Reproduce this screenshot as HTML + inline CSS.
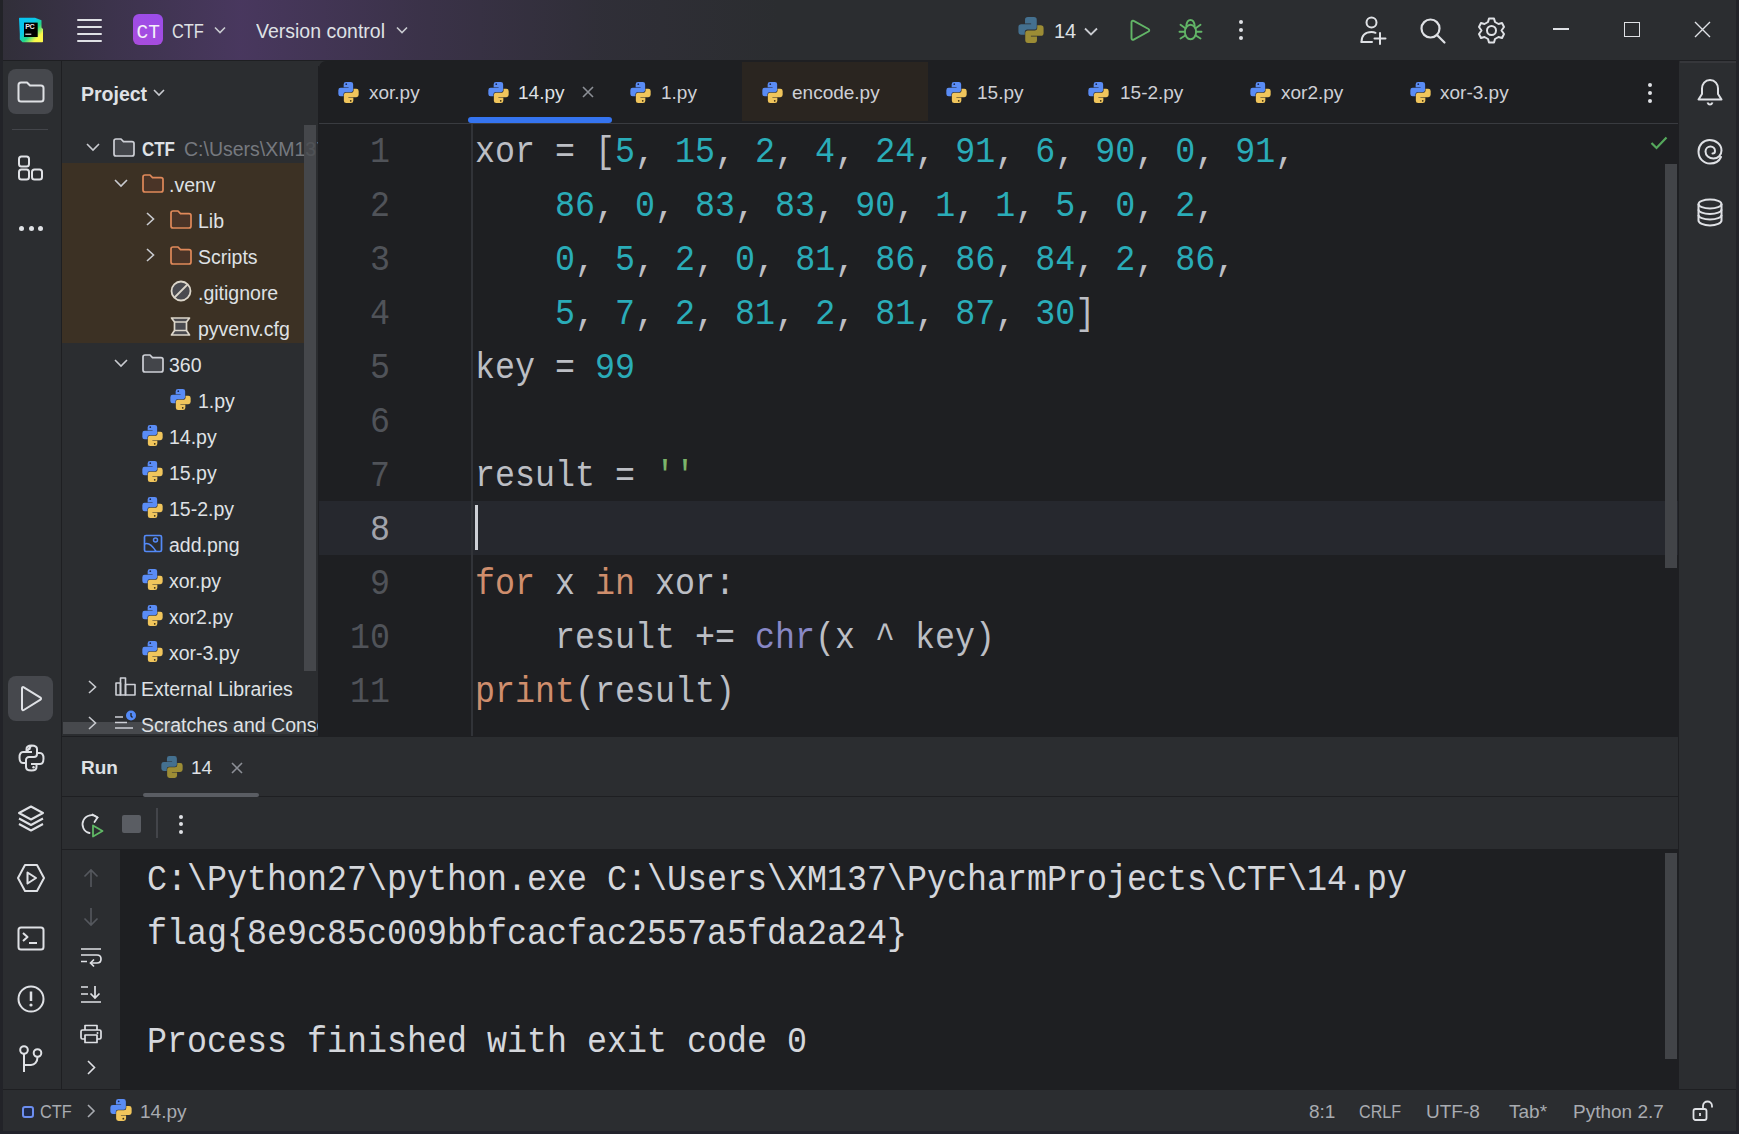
<!DOCTYPE html>
<html><head><meta charset="utf-8">
<style>
*{margin:0;padding:0;box-sizing:border-box}
html,body{width:1739px;height:1134px;overflow:hidden;background:#2B2D30;font-family:"Liberation Sans",sans-serif;color:#DFE1E5}
.a{position:absolute}
.t{position:absolute;white-space:pre;font-size:19px;line-height:22px}
.m{font-family:"Liberation Mono",monospace}
svg{position:absolute;overflow:visible}
</style></head><body>
<svg width="0" height="0" style="position:absolute">
<defs>
<symbol id="py" viewBox="0 0 21 21.7">
<path fill="#5A8CF5" d="M5.5 2.4Q5.5 0 7.9 0H12.9Q15.3 0 15.3 2.4V8.3Q15.3 10.5 13.1 10.5H7.5Q5.3 10.5 5.3 12.7V14.8H2.4Q0 14.8 0 12.4V8.4Q0 6 2.4 6H10.6V5.5H5.5Z"/>
<circle cx="8.2" cy="2.3" r="0.9" fill="#1E2A55"/>
<g transform="rotate(180 10.5 10.85)"><path fill="#F0C55C" d="M5.5 2.4Q5.5 0 7.9 0H12.9Q15.3 0 15.3 2.4V8.3Q15.3 10.5 13.1 10.5H7.5Q5.3 10.5 5.3 12.7V14.8H2.4Q0 14.8 0 12.4V8.4Q0 6 2.4 6H10.6V5.5H5.5Z"/><circle cx="8.2" cy="2.3" r="0.9" fill="#3A2E10"/></g>
</symbol>
<symbol id="pyd" viewBox="0 0 21 21.7">
<path fill="#44708F" d="M5.5 2.4Q5.5 0 7.9 0H12.9Q15.3 0 15.3 2.4V8.3Q15.3 10.5 13.1 10.5H7.5Q5.3 10.5 5.3 12.7V14.8H2.4Q0 14.8 0 12.4V8.4Q0 6 2.4 6H10.6V5.5H5.5Z"/>
<g transform="rotate(180 10.5 10.85)"><path fill="#9C8C35" d="M5.5 2.4Q5.5 0 7.9 0H12.9Q15.3 0 15.3 2.4V8.3Q15.3 10.5 13.1 10.5H7.5Q5.3 10.5 5.3 12.7V14.8H2.4Q0 14.8 0 12.4V8.4Q0 6 2.4 6H10.6V5.5H5.5Z"/></g>
</symbol>
<symbol id="fold" viewBox="0 0 21 18">
<path d="M1 3.2C1 2 2 1 3.2 1H7.5L10 3.6H17.8C19 3.6 20 4.6 20 5.8V14.8C20 16 19 17 17.8 17H3.2C2 17 1 16 1 14.8Z" stroke-width="1.6" stroke-linejoin="round"/>
</symbol>
</defs>
</svg>

<!-- TITLE BAR -->
<div class="a" id="title" style="left:0;top:0;width:1739px;height:60px;background:#2B2D30"></div>
<div class="a" style="left:0;top:0;width:900px;height:60px;background:linear-gradient(90deg,rgba(90,60,120,0.12) 0px,rgba(100,65,140,0.3) 110px,rgba(108,68,150,0.45) 240px,rgba(95,62,130,0.3) 420px,rgba(80,58,110,0.12) 600px,rgba(43,45,48,0) 780px)"></div>


<!-- TITLE CONTENT -->
<svg style="left:18px;top:17px" width="26" height="26" viewBox="0 0 26 26">
<defs><linearGradient id="lg" x1="0" y1="0" x2="1" y2="1"><stop offset="0" stop-color="#07C3F2"/><stop offset="0.38" stop-color="#0BC8E8"/><stop offset="0.58" stop-color="#21D789"/><stop offset="0.8" stop-color="#FCF84A"/><stop offset="1" stop-color="#FCF84A"/></linearGradient></defs>
<path d="M1 1.5Q1 0.8 1.7 0.8H17L23.5 3.2V10.5L25 12V24.5Q25 25.2 24.3 25.2H4.5L1.8 22.5V17Z" fill="url(#lg)"/>
<rect x="6" y="5.6" width="13.7" height="14.4" fill="#000"/>
<text x="7.2" y="12.3" font-family="Liberation Sans" font-size="7.2" font-weight="700" fill="#E8E8E8" letter-spacing="-0.4">PC</text>
<rect x="7.3" y="16.6" width="6" height="1.3" fill="#C8C8C8"/>
</svg>
<div class="a" style="left:77px;top:18.5px;width:25px;height:2.5px;border-radius:1px;background:#DFE1E5"></div>
<div class="a" style="left:77px;top:25.5px;width:25px;height:2.5px;border-radius:1px;background:#DFE1E5"></div>
<div class="a" style="left:77px;top:32.5px;width:25px;height:2.5px;border-radius:1px;background:#DFE1E5"></div>
<div class="a" style="left:77px;top:39.5px;width:25px;height:2.5px;border-radius:1px;background:#DFE1E5"></div>
<div class="a" style="left:133px;top:14px;width:30px;height:31px;border-radius:6px;background:linear-gradient(20deg,#A94CDC,#9A4DEA)"></div>
<div class="t m" style="left:136.5px;top:22px;font-size:19.5px;line-height:22px;color:#F4F0FA;transform:scaleY(1.08);transform-origin:0 17px">CT</div>
<div class="t" style="left:172px;top:20px;font-size:20px;color:#DFE1E5;transform:scaleX(0.82);transform-origin:0 0">CTF</div>
<svg style="left:214px;top:26px" width="12" height="8"><path d="M1 1.5L6 6.5L11 1.5" fill="none" stroke="#C9CBD0" stroke-width="1.6"/></svg>
<div class="t" style="left:256px;top:20px;font-size:20px;color:#DFE1E5;transform:scaleX(0.975);transform-origin:0 0">Version control</div>
<svg style="left:396px;top:26px" width="12" height="8"><path d="M1 1.5L6 6.5L11 1.5" fill="none" stroke="#C9CBD0" stroke-width="1.6"/></svg>

<svg style="left:1018px;top:17px" width="26" height="26"><use href="#pyd"/></svg>
<div class="t" style="left:1054px;top:20px;font-size:20px;color:#DFE1E5">14</div>
<svg style="left:1084px;top:27px" width="14" height="9"><path d="M1 1.5L7 7.5L13 1.5" fill="none" stroke="#C9CBD0" stroke-width="1.8"/></svg>
<svg style="left:1130px;top:19px" width="21" height="22" viewBox="0 0 21 22"><path d="M1.5 3.2C1.5 2 2.7 1.3 3.7 1.9L18.5 10C19.5 10.6 19.5 11.9 18.5 12.5L3.7 20.6C2.7 21.2 1.5 20.5 1.5 19.3Z" fill="none" stroke="#62B567" stroke-width="1.9" stroke-linejoin="round"/></svg>
<svg style="left:1178px;top:18px" width="25" height="23" viewBox="0 0 25 23"><g fill="none" stroke="#62B567" stroke-width="1.9" stroke-linecap="round">
<ellipse cx="12.5" cy="14" rx="5.6" ry="7.3"/>
<path d="M8.3 8C8.6 4.5 10.3 2 12.5 2C14.7 2 16.4 4.5 16.7 8"/>
<path d="M7 10L2.5 6.8M6.8 13.8H1.5M7.2 17.5L2.5 20.5M18 10L22.5 6.8M18.2 13.8H23.5M17.8 17.5L22.5 20.5"/>
</g></svg>
<div class="a" style="left:1239px;top:20px;width:4px;height:4px;border-radius:2px;background:#DFE1E5"></div>
<div class="a" style="left:1239px;top:28px;width:4px;height:4px;border-radius:2px;background:#DFE1E5"></div>
<div class="a" style="left:1239px;top:36px;width:4px;height:4px;border-radius:2px;background:#DFE1E5"></div>

<svg style="left:1360px;top:16px" width="28" height="29" viewBox="0 0 28 29">
<g fill="none" stroke="#DFE1E5" stroke-width="2" stroke-linecap="round">
<circle cx="11.5" cy="6.5" r="5"/>
<path d="M1.5 26C1.5 19.5 5.5 16 11.5 16C13 16 14.5 16.3 15.5 16.8"/>
<path d="M1.5 26H12M20 17V28M14.5 22.5H25.5"/>
</g></svg>
<svg style="left:1420px;top:18px" width="26" height="26" viewBox="0 0 26 26">
<g fill="none" stroke="#DFE1E5" stroke-width="2.2" stroke-linecap="round">
<circle cx="10.5" cy="10.5" r="9"/><path d="M17 17L24.5 24.5"/>
</g></svg>
<svg style="left:1478px;top:17px" width="27" height="27" viewBox="0 0 27 27">
<g fill="none" stroke="#DFE1E5" stroke-width="2" stroke-linejoin="round">
<path d="M11 1.5H16L17 5L20.5 7L24 6L26 10L23.5 13.5L26 17L24 21L20.5 20L17 22L16 25.5H11L10 22L6.5 20L3 21L1 17L3.5 13.5L1 10L3 6L6.5 7L10 5Z"/>
<circle cx="13.5" cy="13.5" r="4.5"/>
</g></svg>
<div class="a" style="left:1553px;top:28px;width:16px;height:1.5px;background:#DFE1E5"></div>
<div class="a" style="left:1624px;top:22px;width:16px;height:15px;border:1.5px solid #DFE1E5"></div>
<svg style="left:1694px;top:21px" width="17" height="17"><path d="M1 1L16 16M16 1L1 16" stroke="#DFE1E5" stroke-width="1.4"/></svg>

<!-- PANELS -->
<div class="a" style="left:0;top:60px;width:1739px;height:1px;background:#1E1F22"></div>
<div class="a" id="lstrip" style="left:0;top:61px;width:61px;height:1028px;background:#2B2D30"></div>
<div class="a" style="left:61px;top:61px;width:1px;height:1028px;background:#1E1F22"></div>
<div class="a" id="proj" style="left:62px;top:61px;width:256px;height:675px;background:#2B2D30"></div>
<div class="a" style="left:318px;top:66px;width:1px;height:670px;background:#1E1F22"></div>
<div class="a" id="tabs" style="left:319px;top:61px;width:1359px;height:62px;background:#1E1F22;border-top-left-radius:7px"></div>
<div class="a" style="left:319px;top:123px;width:1359px;height:1px;background:#393B40"></div>
<div class="a" id="editor" style="left:319px;top:124px;width:1359px;height:612px;background:#1E1F22"></div>
<div class="a" style="left:1678px;top:61px;width:1px;height:1028px;background:#1E1F22"></div>
<div class="a" id="rstrip" style="left:1679px;top:61px;width:60px;height:1028px;background:#2B2D30"></div>
<div class="a" style="left:1680px;top:61px;width:59px;height:1.5px;background:#36373B"></div>
<div class="a" style="left:62px;top:736px;width:1616px;height:1px;background:#1E1F22"></div>
<div class="a" id="run" style="left:62px;top:737px;width:1616px;height:352px;background:#2B2D30"></div>
<div class="a" style="left:62px;top:796px;width:1616px;height:1px;background:#1E1F22"></div>
<div class="a" style="left:62px;top:849px;width:1616px;height:1px;background:#1E1F22"></div>
<div class="a" id="console" style="left:120px;top:850px;width:1558px;height:239px;background:#1E1F22"></div>
<div class="a" style="left:0;top:1089px;width:1739px;height:1px;background:#1E1F22"></div>
<div class="a" id="status" style="left:0;top:1090px;width:1739px;height:44px;background:#2B2D30"></div>

<div class="a" style="left:62px;top:61px;width:256px;height:675px;overflow:hidden"><div class="a" style="left:-62px;top:-61px;width:1739px;height:1134px">
<!-- PROJECT PANEL -->
<div class="t" style="left:81px;top:83px;font-size:19.5px;color:#DFE1E5;font-weight:700;">Project</div>
<svg style="left:153px;top:89px" width="12" height="7"><path d="M1 1L6 6L11 1" fill="none" stroke="#C9CBD0" stroke-width="1.6"/></svg>
<div class="a" style="left:62px;top:163px;width:242px;height:180px;background:#3C3124"></div>
<svg style="left:86px;top:143px" width="14" height="8"><path d="M1 1L7 7L13 1" fill="none" stroke="#C9CBD0" stroke-width="1.6"/></svg>
<svg style="left:113px;top:138px" width="22" height="19" viewBox="0 0 22 19"><path d="M1 3C1 1.9 1.9 1 3 1H8L10.5 3.6H19C20.1 3.6 21 4.5 21 5.6V16C21 17.1 20.1 18 19 18H3C1.9 18 1 17.1 1 16Z" fill="#43454A" stroke="#CED0D6" stroke-width="1.7" stroke-linejoin="round"/></svg>
<div class="t" style="left:142px;top:138px;font-size:19.5px;color:#DFE1E5;font-weight:700;transform:scaleX(0.87);transform-origin:0 0">CTF</div>
<div class="t" style="left:184px;top:138px;font-size:19.5px;color:#76797F;">C:\Users\XM137\PycharmProjects\CTF</div>
<svg style="left:114px;top:179px" width="14" height="8"><path d="M1 1L7 7L13 1" fill="none" stroke="#C9CBD0" stroke-width="1.6"/></svg>
<svg style="left:142px;top:174px" width="22" height="19" viewBox="0 0 22 19"><path d="M1 3C1 1.9 1.9 1 3 1H8L10.5 3.6H19C20.1 3.6 21 4.5 21 5.6V16C21 17.1 20.1 18 19 18H3C1.9 18 1 17.1 1 16Z" fill="#4A3427" stroke="#E0895A" stroke-width="1.7" stroke-linejoin="round"/></svg>
<div class="t" style="left:169px;top:174px;font-size:19.5px;color:#DFE1E5;">.venv</div>
<svg style="left:146px;top:212px" width="9" height="14"><path d="M1 1L7.5 7L1 13" fill="none" stroke="#C9CBD0" stroke-width="1.6"/></svg>
<svg style="left:170px;top:210px" width="22" height="19" viewBox="0 0 22 19"><path d="M1 3C1 1.9 1.9 1 3 1H8L10.5 3.6H19C20.1 3.6 21 4.5 21 5.6V16C21 17.1 20.1 18 19 18H3C1.9 18 1 17.1 1 16Z" fill="#4A3427" stroke="#E0895A" stroke-width="1.7" stroke-linejoin="round"/></svg>
<div class="t" style="left:198px;top:210px;font-size:19.5px;color:#DFE1E5;">Lib</div>
<svg style="left:146px;top:248px" width="9" height="14"><path d="M1 1L7.5 7L1 13" fill="none" stroke="#C9CBD0" stroke-width="1.6"/></svg>
<svg style="left:170px;top:246px" width="22" height="19" viewBox="0 0 22 19"><path d="M1 3C1 1.9 1.9 1 3 1H8L10.5 3.6H19C20.1 3.6 21 4.5 21 5.6V16C21 17.1 20.1 18 19 18H3C1.9 18 1 17.1 1 16Z" fill="#4A3427" stroke="#E0895A" stroke-width="1.7" stroke-linejoin="round"/></svg>
<div class="t" style="left:198px;top:246px;font-size:19.5px;color:#DFE1E5;">Scripts</div>
<svg style="left:170px;top:280px" width="22" height="22" viewBox="0 0 22 22"><circle cx="11" cy="11" r="9.5" fill="#4A4A4F" stroke="#DCD6CA" stroke-width="1.8"/><path d="M4.5 17.5L17.5 4.5" stroke="#DCD6CA" stroke-width="1.8"/></svg>
<div class="t" style="left:198px;top:282px;font-size:19.5px;color:#DFE1E5;">.gitignore</div>
<svg style="left:170px;top:317px" width="21" height="19" viewBox="0 0 21 19"><path d="M1.5 1H19.5L16.5 5V13.5L19.5 18H1.5L4.5 13.5V5Z" fill="#4A4A4F" stroke="#DCD6CA" stroke-width="1.7" stroke-linejoin="round"/><path d="M4.5 5H16.5M4.5 13.5H16.5" stroke="#DCD6CA" stroke-width="1.7"/></svg>
<div class="t" style="left:198px;top:318px;font-size:19.5px;color:#DFE1E5;">pyvenv.cfg</div>
<svg style="left:114px;top:359px" width="14" height="8"><path d="M1 1L7 7L13 1" fill="none" stroke="#C9CBD0" stroke-width="1.6"/></svg>
<svg style="left:142px;top:354px" width="22" height="19" viewBox="0 0 22 19"><path d="M1 3C1 1.9 1.9 1 3 1H8L10.5 3.6H19C20.1 3.6 21 4.5 21 5.6V16C21 17.1 20.1 18 19 18H3C1.9 18 1 17.1 1 16Z" fill="#43454A" stroke="#CED0D6" stroke-width="1.7" stroke-linejoin="round"/></svg>
<div class="t" style="left:169px;top:354px;font-size:19.5px;color:#DFE1E5;">360</div>
<svg style="left:170px;top:389px" width="21" height="21"><use href="#py"/></svg>
<div class="t" style="left:198px;top:390px;font-size:19.5px;color:#DFE1E5;">1.py</div>
<svg style="left:142px;top:425px" width="21" height="21"><use href="#py"/></svg>
<div class="t" style="left:169px;top:426px;font-size:19.5px;color:#DFE1E5;">14.py</div>
<svg style="left:142px;top:461px" width="21" height="21"><use href="#py"/></svg>
<div class="t" style="left:169px;top:462px;font-size:19.5px;color:#DFE1E5;">15.py</div>
<svg style="left:142px;top:497px" width="21" height="21"><use href="#py"/></svg>
<div class="t" style="left:169px;top:498px;font-size:19.5px;color:#DFE1E5;">15-2.py</div>
<svg style="left:142px;top:569px" width="21" height="21"><use href="#py"/></svg>
<div class="t" style="left:169px;top:570px;font-size:19.5px;color:#DFE1E5;">xor.py</div>
<svg style="left:142px;top:605px" width="21" height="21"><use href="#py"/></svg>
<div class="t" style="left:169px;top:606px;font-size:19.5px;color:#DFE1E5;">xor2.py</div>
<svg style="left:142px;top:641px" width="21" height="21"><use href="#py"/></svg>
<div class="t" style="left:169px;top:642px;font-size:19.5px;color:#DFE1E5;">xor-3.py</div>
<svg style="left:143px;top:534px" width="20" height="19" viewBox="0 0 20 19"><rect x="1.5" y="1.5" width="17" height="16" rx="1.5" fill="none" stroke="#548AF7" stroke-width="1.7"/><circle cx="12.5" cy="6" r="2" fill="none" stroke="#548AF7" stroke-width="1.5"/><path d="M1.5 10C5 8.5 9 11 13 17.5" fill="none" stroke="#548AF7" stroke-width="1.6"/></svg>
<div class="t" style="left:169px;top:534px;font-size:19.5px;color:#DFE1E5;">add.png</div>
<svg style="left:88px;top:680px" width="9" height="14"><path d="M1 1L7.5 7L1 13" fill="none" stroke="#C9CBD0" stroke-width="1.6"/></svg>
<svg style="left:115px;top:677px" width="21" height="19" viewBox="0 0 21 19"><g fill="none" stroke="#CED0D6" stroke-width="1.6" stroke-linejoin="round"><path d="M1 6H5.5V18H1Z"/><path d="M5.5 1H10.5V18H5.5Z"/><path d="M10.5 7.5H20V18H10.5Z"/></g></svg>
<div class="t" style="left:141px;top:678px;font-size:19.5px;color:#DFE1E5;">External Libraries</div>
<div class="a" style="left:63px;top:722px;width:120px;height:12px;background:#47494D"></div>
<div class="a" style="left:183px;top:722px;width:121px;height:12px;background:#37393C"></div>
<svg style="left:88px;top:716px" width="9" height="14"><path d="M1 1L7.5 7L1 13" fill="none" stroke="#C9CBD0" stroke-width="1.6"/></svg>
<svg style="left:114px;top:710px" width="24" height="24" viewBox="0 0 24 24"><g stroke="#CED0D6" stroke-width="1.6"><path d="M1 7H9M1 12.5H13M1 18H19"/></g><circle cx="17" cy="5.5" r="5" fill="#548AF7"/><path d="M17 3V6L18.5 7.5" stroke="#1E1F22" stroke-width="1.3" fill="none"/></svg>
<div class="t" style="left:141px;top:714px;font-size:19.5px;color:#DFE1E5;">Scratches and Consoles</div>
<div class="a" style="left:304px;top:125px;width:12px;height:546px;background:#4A4C50;opacity:0.85"></div>
</div></div>
<!-- TABS -->
<div class="a" style="left:742px;top:62px;width:186px;height:59px;background:#2A2520"></div>
<svg style="left:338px;top:82px" width="21" height="21"><use href="#py"/></svg>
<div class="t" style="left:369px;top:82px;font-size:19px;color:#CED0D6;">xor.py</div>
<svg style="left:488px;top:82px" width="21" height="21"><use href="#py"/></svg>
<div class="t" style="left:518px;top:82px;font-size:19px;color:#DFE1E5;">14.py</div>
<svg style="left:630px;top:82px" width="21" height="21"><use href="#py"/></svg>
<div class="t" style="left:661px;top:82px;font-size:19px;color:#CED0D6;">1.py</div>
<svg style="left:762px;top:82px" width="21" height="21"><use href="#py"/></svg>
<div class="t" style="left:792px;top:82px;font-size:19px;color:#CED0D6;">encode.py</div>
<svg style="left:946px;top:82px" width="21" height="21"><use href="#py"/></svg>
<div class="t" style="left:977px;top:82px;font-size:19px;color:#CED0D6;">15.py</div>
<svg style="left:1088px;top:82px" width="21" height="21"><use href="#py"/></svg>
<div class="t" style="left:1120px;top:82px;font-size:19px;color:#CED0D6;">15-2.py</div>
<svg style="left:1250px;top:82px" width="21" height="21"><use href="#py"/></svg>
<div class="t" style="left:1281px;top:82px;font-size:19px;color:#CED0D6;">xor2.py</div>
<svg style="left:1410px;top:82px" width="21" height="21"><use href="#py"/></svg>
<div class="t" style="left:1440px;top:82px;font-size:19px;color:#CED0D6;">xor-3.py</div>
<svg style="left:582px;top:86px" width="12" height="12"><path d="M1 1L11 11M11 1L1 11" stroke="#8C8F96" stroke-width="1.6"/></svg>
<div class="a" style="left:468px;top:117px;width:144px;height:6px;border-radius:3px;background:#3574F0"></div>
<div class="a" style="left:1648px;top:83px;width:4px;height:4px;border-radius:2px;background:#DFE1E5"></div>
<div class="a" style="left:1648px;top:91px;width:4px;height:4px;border-radius:2px;background:#DFE1E5"></div>
<div class="a" style="left:1648px;top:99px;width:4px;height:4px;border-radius:2px;background:#DFE1E5"></div>
<!-- EDITOR -->
<div class="a" style="left:319px;top:501px;width:1359px;height:54px;background:#26282E"></div>
<div class="a" style="left:471px;top:124px;width:2px;height:612px;background:#313338"></div>
<div class="t m" style="left:330px;width:60px;text-align:right;top:133px;font-size:33.333px;line-height:40px;transform:scaleY(1.1);transform-origin:0 29px;color:#505359">1</div>
<div class="t m" style="left:475px;top:133px;font-size:33.333px;line-height:40px;transform:scaleY(1.1);transform-origin:0 29px"><span style="color:#BCBEC4">xor = [</span><span style="color:#2AACB8">5</span><span style="color:#BCBEC4">, </span><span style="color:#2AACB8">15</span><span style="color:#BCBEC4">, </span><span style="color:#2AACB8">2</span><span style="color:#BCBEC4">, </span><span style="color:#2AACB8">4</span><span style="color:#BCBEC4">, </span><span style="color:#2AACB8">24</span><span style="color:#BCBEC4">, </span><span style="color:#2AACB8">91</span><span style="color:#BCBEC4">, </span><span style="color:#2AACB8">6</span><span style="color:#BCBEC4">, </span><span style="color:#2AACB8">90</span><span style="color:#BCBEC4">, </span><span style="color:#2AACB8">0</span><span style="color:#BCBEC4">, </span><span style="color:#2AACB8">91</span><span style="color:#BCBEC4">,</span></div>
<div class="t m" style="left:330px;width:60px;text-align:right;top:187px;font-size:33.333px;line-height:40px;transform:scaleY(1.1);transform-origin:0 29px;color:#505359">2</div>
<div class="t m" style="left:475px;top:187px;font-size:33.333px;line-height:40px;transform:scaleY(1.1);transform-origin:0 29px"><span style="color:#BCBEC4">    </span><span style="color:#2AACB8">86</span><span style="color:#BCBEC4">, </span><span style="color:#2AACB8">0</span><span style="color:#BCBEC4">, </span><span style="color:#2AACB8">83</span><span style="color:#BCBEC4">, </span><span style="color:#2AACB8">83</span><span style="color:#BCBEC4">, </span><span style="color:#2AACB8">90</span><span style="color:#BCBEC4">, </span><span style="color:#2AACB8">1</span><span style="color:#BCBEC4">, </span><span style="color:#2AACB8">1</span><span style="color:#BCBEC4">, </span><span style="color:#2AACB8">5</span><span style="color:#BCBEC4">, </span><span style="color:#2AACB8">0</span><span style="color:#BCBEC4">, </span><span style="color:#2AACB8">2</span><span style="color:#BCBEC4">,</span></div>
<div class="t m" style="left:330px;width:60px;text-align:right;top:241px;font-size:33.333px;line-height:40px;transform:scaleY(1.1);transform-origin:0 29px;color:#505359">3</div>
<div class="t m" style="left:475px;top:241px;font-size:33.333px;line-height:40px;transform:scaleY(1.1);transform-origin:0 29px"><span style="color:#BCBEC4">    </span><span style="color:#2AACB8">0</span><span style="color:#BCBEC4">, </span><span style="color:#2AACB8">5</span><span style="color:#BCBEC4">, </span><span style="color:#2AACB8">2</span><span style="color:#BCBEC4">, </span><span style="color:#2AACB8">0</span><span style="color:#BCBEC4">, </span><span style="color:#2AACB8">81</span><span style="color:#BCBEC4">, </span><span style="color:#2AACB8">86</span><span style="color:#BCBEC4">, </span><span style="color:#2AACB8">86</span><span style="color:#BCBEC4">, </span><span style="color:#2AACB8">84</span><span style="color:#BCBEC4">, </span><span style="color:#2AACB8">2</span><span style="color:#BCBEC4">, </span><span style="color:#2AACB8">86</span><span style="color:#BCBEC4">,</span></div>
<div class="t m" style="left:330px;width:60px;text-align:right;top:295px;font-size:33.333px;line-height:40px;transform:scaleY(1.1);transform-origin:0 29px;color:#505359">4</div>
<div class="t m" style="left:475px;top:295px;font-size:33.333px;line-height:40px;transform:scaleY(1.1);transform-origin:0 29px"><span style="color:#BCBEC4">    </span><span style="color:#2AACB8">5</span><span style="color:#BCBEC4">, </span><span style="color:#2AACB8">7</span><span style="color:#BCBEC4">, </span><span style="color:#2AACB8">2</span><span style="color:#BCBEC4">, </span><span style="color:#2AACB8">81</span><span style="color:#BCBEC4">, </span><span style="color:#2AACB8">2</span><span style="color:#BCBEC4">, </span><span style="color:#2AACB8">81</span><span style="color:#BCBEC4">, </span><span style="color:#2AACB8">87</span><span style="color:#BCBEC4">, </span><span style="color:#2AACB8">30</span><span style="color:#BCBEC4">]</span></div>
<div class="t m" style="left:330px;width:60px;text-align:right;top:349px;font-size:33.333px;line-height:40px;transform:scaleY(1.1);transform-origin:0 29px;color:#505359">5</div>
<div class="t m" style="left:475px;top:349px;font-size:33.333px;line-height:40px;transform:scaleY(1.1);transform-origin:0 29px"><span style="color:#BCBEC4">key = </span><span style="color:#2AACB8">99</span></div>
<div class="t m" style="left:330px;width:60px;text-align:right;top:403px;font-size:33.333px;line-height:40px;transform:scaleY(1.1);transform-origin:0 29px;color:#505359">6</div>
<div class="t m" style="left:330px;width:60px;text-align:right;top:457px;font-size:33.333px;line-height:40px;transform:scaleY(1.1);transform-origin:0 29px;color:#505359">7</div>
<div class="t m" style="left:475px;top:457px;font-size:33.333px;line-height:40px;transform:scaleY(1.1);transform-origin:0 29px"><span style="color:#BCBEC4">result = </span><span style="color:#7CB56A">''</span></div>
<div class="t m" style="left:330px;width:60px;text-align:right;top:511px;font-size:33.333px;line-height:40px;transform:scaleY(1.1);transform-origin:0 29px;color:#A1A3AB">8</div>
<div class="t m" style="left:330px;width:60px;text-align:right;top:565px;font-size:33.333px;line-height:40px;transform:scaleY(1.1);transform-origin:0 29px;color:#505359">9</div>
<div class="t m" style="left:475px;top:565px;font-size:33.333px;line-height:40px;transform:scaleY(1.1);transform-origin:0 29px"><span style="color:#CF8E6D">for</span><span style="color:#BCBEC4"> x </span><span style="color:#CF8E6D">in</span><span style="color:#BCBEC4"> xor:</span></div>
<div class="t m" style="left:330px;width:60px;text-align:right;top:619px;font-size:33.333px;line-height:40px;transform:scaleY(1.1);transform-origin:0 29px;color:#505359">10</div>
<div class="t m" style="left:475px;top:619px;font-size:33.333px;line-height:40px;transform:scaleY(1.1);transform-origin:0 29px"><span style="color:#BCBEC4">    result += </span><span style="color:#8888C6">chr</span><span style="color:#BCBEC4">(x ^ key)</span></div>
<div class="t m" style="left:330px;width:60px;text-align:right;top:673px;font-size:33.333px;line-height:40px;transform:scaleY(1.1);transform-origin:0 29px;color:#505359">11</div>
<div class="t m" style="left:475px;top:673px;font-size:33.333px;line-height:40px;transform:scaleY(1.1);transform-origin:0 29px"><span style="color:#CF8E6D">print</span><span style="color:#BCBEC4">(result)</span></div>
<div class="a" style="left:475px;top:505px;width:3px;height:45px;background:#CED0D6"></div>
<svg style="left:1650px;top:136px" width="18" height="14"><path d="M1.5 7L6.5 12L16.5 1.5" fill="none" stroke="#55A85C" stroke-width="2.2"/></svg>
<div class="a" style="left:1665px;top:164px;width:12px;height:404px;background:#424448"></div>
<!-- LEFT STRIP -->
<div class="a" style="left:8px;top:69px;width:45px;height:45px;border-radius:8px;background:#46484D"></div>
<svg style="left:17px;top:81px" width="28" height="22" viewBox="0 0 28 22"><path d="M1.5 4C1.5 2.6 2.6 1.5 4 1.5H10L13 4.5H24C25.4 4.5 26.5 5.6 26.5 7V18C26.5 19.4 25.4 20.5 24 20.5H4C2.6 20.5 1.5 19.4 1.5 18Z" fill="none" stroke="#DFE1E5" stroke-width="2" stroke-linejoin="round"/></svg>
<div class="a" style="left:12px;top:129px;width:36px;height:1px;background:#43454A"></div>
<svg style="left:17px;top:155px" width="28" height="27" viewBox="0 0 28 27"><g fill="none" stroke="#DFE1E5" stroke-width="2"><rect x="2" y="1.5" width="10" height="10" rx="2.5"/><rect x="2" y="14.5" width="10" height="10" rx="2.5"/><rect x="15" y="14.5" width="10" height="10" rx="2.5"/></g></svg>
<div class="a" style="left:19px;top:226px;width:5px;height:5px;border-radius:3px;background:#DFE1E5"></div>
<div class="a" style="left:29px;top:226px;width:5px;height:5px;border-radius:3px;background:#DFE1E5"></div>
<div class="a" style="left:38px;top:226px;width:5px;height:5px;border-radius:3px;background:#DFE1E5"></div>

<div class="a" style="left:8px;top:676px;width:45px;height:45px;border-radius:8px;background:#46484D"></div>
<svg style="left:19px;top:685px" width="25" height="28" viewBox="0 0 25 28"><path d="M3 3.2C3 2.3 4 1.8 4.8 2.3L21.5 12.6C22.2 13.1 22.2 14.2 21.5 14.6L4.8 25C4 25.5 3 25 3 24.1Z" fill="none" stroke="#DFE1E5" stroke-width="2" stroke-linejoin="round"/></svg>
<svg style="left:18px;top:744px" width="27" height="28" viewBox="0 0 27 28"><g fill="none" stroke="#DFE1E5" stroke-width="2" stroke-linejoin="round">
<path d="M13.5 1.5C9.5 1.5 8.5 3 8.5 5V8H14M8.5 8H5C2.8 8 1.5 10.2 1.5 13.5C1.5 16.8 2.8 19 5 19H8V16C8 14.3 9.3 13 11 13H16C17.7 13 19 11.7 19 10V5C19 3 17.5 1.5 13.5 1.5Z"/>
<path d="M13.5 26.5C17.5 26.5 18.5 25 18.5 23V20H13M18.5 20H22C24.2 20 25.5 17.8 25.5 14.5C25.5 11.2 24.2 9 22 9H19M8 16V23C8 25 9.5 26.5 13.5 26.5"/>
</g><circle cx="11.5" cy="4.8" r="1.2" fill="#DFE1E5"/><circle cx="15.5" cy="23.2" r="1.2" fill="#DFE1E5"/></svg>
<svg style="left:17px;top:805px" width="28" height="27" viewBox="0 0 28 27"><g fill="none" stroke="#DFE1E5" stroke-width="2" stroke-linejoin="round">
<path d="M14 1.5L26 8L14 14.5L2 8Z"/><path d="M2 13.5L14 20L26 13.5"/><path d="M2 19L14 25.5L26 19"/></g></svg>
<svg style="left:16px;top:863px" width="30" height="30" viewBox="0 0 30 30"><g fill="none" stroke="#DFE1E5" stroke-width="2" stroke-linejoin="round">
<path d="M9 2H21L28 15L21 28H9L2 15Z"/><path d="M11.5 9.5L20 15L11.5 20.5Z"/></g></svg>
<svg style="left:17px;top:926px" width="28" height="25" viewBox="0 0 28 25"><g fill="none" stroke="#DFE1E5" stroke-width="2" stroke-linejoin="round">
<rect x="1.5" y="1.5" width="25" height="22" rx="2.5"/><path d="M6 7L10.5 11L6 15"/><path d="M12 17H20"/></g></svg>
<svg style="left:17px;top:985px" width="28" height="28" viewBox="0 0 28 28"><g fill="none" stroke="#DFE1E5" stroke-width="2">
<circle cx="14" cy="14" r="12.5"/><path d="M14 6.5V16" stroke-width="2.5"/></g><circle cx="14" cy="20" r="1.6" fill="#DFE1E5"/></svg>
<svg style="left:19px;top:1045px" width="24" height="28" viewBox="0 0 24 28"><g fill="none" stroke="#DFE1E5" stroke-width="2">
<circle cx="5" cy="5" r="3.8"/><circle cx="18.5" cy="8" r="3.8"/><path d="M5 9V27M5 20H12C15.5 20 18.5 17 18.5 12"/></g></svg>

<!-- RUN PANEL -->
<div class="t" style="left:81px;top:757px;font-size:19px;color:#DFE1E5;font-weight:700;">Run</div>
<svg style="left:161px;top:756px" width="22" height="22"><use href="#pyd"/></svg>
<div class="t" style="left:191px;top:757px;font-size:19px;color:#DFE1E5;">14</div>
<svg style="left:231px;top:762px" width="12" height="12"><path d="M1 1L11 11M11 1L1 11" stroke="#8C8F96" stroke-width="1.6"/></svg>
<div class="a" style="left:143px;top:793px;width:116px;height:4px;border-radius:2px;background:#5A5D63"></div>
<svg style="left:80px;top:812px" width="25" height="26" viewBox="0 0 25 26"><g fill="none" stroke="#DFE1E5" stroke-width="1.8" stroke-linecap="round"><path d="M17.5 5.5A9 9 0 1 0 9.5 21"/><path d="M12.5 2.5L17.5 5.5L14.5 10"/></g><path d="M13 13.5L22.5 19L13 24.5Z" fill="none" stroke="#5FB865" stroke-width="1.8" stroke-linejoin="round"/></svg>
<div class="a" style="left:122px;top:815px;width:19px;height:18px;border-radius:2px;background:#5A5D63"></div>
<div class="a" style="left:156px;top:808px;width:2px;height:30px;background:#43454A"></div>
<div class="a" style="left:179px;top:815px;width:4px;height:4px;border-radius:2px;background:#DFE1E5"></div>
<div class="a" style="left:179px;top:822px;width:4px;height:4px;border-radius:2px;background:#DFE1E5"></div>
<div class="a" style="left:179px;top:830px;width:4px;height:4px;border-radius:2px;background:#DFE1E5"></div>
<svg style="left:83px;top:868px" width="16" height="20"><path d="M8 19V2M1.5 8.5L8 2L14.5 8.5" fill="none" stroke="#55585E" stroke-width="1.6"/></svg>
<svg style="left:83px;top:907px" width="16" height="20"><path d="M8 1V18M1.5 11.5L8 18L14.5 11.5" fill="none" stroke="#55585E" stroke-width="1.6"/></svg>
<svg style="left:80px;top:947px" width="23" height="21" viewBox="0 0 23 21"><g fill="none" stroke="#DFE1E5" stroke-width="1.7"><path d="M1 2H21M1 14.5H7M1 8H17C19.5 8 21 9.8 21 12C21 14.2 19.5 16 17 16H11"/><path d="M14 12.5L10.5 16L14 19.5"/></g></svg>
<svg style="left:80px;top:985px" width="23" height="19" viewBox="0 0 23 19"><g fill="none" stroke="#DFE1E5" stroke-width="1.7"><path d="M1 2H8M1 9H8M1 17H21"/><path d="M15 1V13M10.5 8.5L15 13L19.5 8.5"/></g></svg>
<svg style="left:80px;top:1024px" width="23" height="20" viewBox="0 0 23 20"><g fill="none" stroke="#DFE1E5" stroke-width="1.7" stroke-linejoin="round"><path d="M5 6V1.5H17V6"/><path d="M5 15H2.5C1.7 15 1 14.3 1 13.5V7.5C1 6.7 1.7 6 2.5 6H19.5C20.3 6 21 6.7 21 7.5V13.5C21 14.3 20.3 15 19.5 15H17"/><path d="M5 11H17V18.5H5Z"/></g><circle cx="17.5" cy="9" r="1" fill="#DFE1E5"/></svg>
<svg style="left:87px;top:1060px" width="9" height="15"><path d="M1 1L7.5 7.5L1 14" fill="none" stroke="#DFE1E5" stroke-width="1.6"/></svg>
<div class="t m" style="left:147px;top:861px;font-size:33.333px;line-height:40px;transform:scaleY(1.1);transform-origin:0 29px;color:#D5D7DC">C:\Python27\python.exe C:\Users\XM137\PycharmProjects\CTF\14.py</div>
<div class="t m" style="left:147px;top:915px;font-size:33.333px;line-height:40px;transform:scaleY(1.1);transform-origin:0 29px;color:#D5D7DC">flag{8e9c85c009bbfcacfac2557a5fda2a24}</div>
<div class="t m" style="left:147px;top:1023px;font-size:33.333px;line-height:40px;transform:scaleY(1.1);transform-origin:0 29px;color:#D5D7DC">Process finished with exit code 0</div>
<div class="a" style="left:1665px;top:853px;width:12px;height:206px;background:#424448"></div>
<!-- STATUS -->
<div class="a" style="left:22px;top:1106px;width:12px;height:12px;border:2px solid #6C8EF0;border-radius:3px;background:#1F2A4A"></div>
<div class="t" style="left:40px;top:1101px;font-size:19px;color:#A8ABB0;transform:scaleX(0.86);transform-origin:0 0">CTF</div>
<svg style="left:87px;top:1104px" width="8" height="14"><path d="M1 1L7 7L1 13" fill="none" stroke="#A8ABB0" stroke-width="1.6"/></svg>
<svg style="left:110px;top:1099px" width="22" height="22"><use href="#py"/></svg>
<div class="t" style="left:140px;top:1101px;font-size:19px;color:#A8ABB0;">14.py</div>
<div class="t" style="left:1309px;top:1101px;font-size:19px;color:#A8ABB0;">8:1</div>
<div class="t" style="left:1359px;top:1101px;font-size:19px;color:#A8ABB0;transform:scaleX(0.85);transform-origin:0 0">CRLF</div>
<div class="t" style="left:1426px;top:1101px;font-size:19px;color:#A8ABB0;">UTF-8</div>
<div class="t" style="left:1509px;top:1101px;font-size:19px;color:#A8ABB0;">Tab*</div>
<div class="t" style="left:1573px;top:1101px;font-size:19px;color:#A8ABB0;">Python 2.7</div>
<svg style="left:1692px;top:1100px" width="24" height="22" viewBox="0 0 24 22"><g fill="none" stroke="#DFE1E5" stroke-width="1.8" stroke-linejoin="round"><rect x="1.5" y="9" width="13" height="11" rx="2"/><path d="M11 9V6C11 3.2 13.2 1.5 15.5 1.5C17.8 1.5 20 3.2 20 6V7.5"/><path d="M8 13V16"/></g></svg>
<!-- RIGHT STRIP -->
<svg style="left:1697px;top:78px" width="26" height="28" viewBox="0 0 26 28"><g fill="none" stroke="#DFE1E5" stroke-width="2" stroke-linejoin="round"><path d="M13 2C8 2 5 6 5 10.5V16L1.5 21.5H24.5L21 16V10.5C21 6 18 2 13 2Z"/><path d="M10.5 24.5C11 26 12 26.5 13 26.5C14 26.5 15 26 15.5 24.5"/></g></svg>
<svg style="left:1697px;top:138px" width="26" height="27" viewBox="0 0 26 27"><g fill="none" stroke="#DFE1E5" stroke-width="2" stroke-linecap="round"><path d="M24 19C22 23.5 18 25.5 13 25.5C6.5 25.5 1.5 20.5 1.5 13.5C1.5 7 6.5 2 12.5 2C19 2 24.5 6.5 24.5 12.5C24.5 17 21 20.5 16.5 20.5C12 20.5 8.5 17.5 8.5 13.5C8.5 10.5 10.8 8.5 13.5 8.5C16 8.5 18 10.3 18 13C18 14.5 17 15.5 15.5 15.5"/></g></svg>
<svg style="left:1697px;top:198px" width="26" height="29" viewBox="0 0 26 29"><g fill="none" stroke="#DFE1E5" stroke-width="2"><ellipse cx="13" cy="6" rx="11.5" ry="4.5"/><path d="M1.5 6V22.5C1.5 25 6.5 27.5 13 27.5C19.5 27.5 24.5 25 24.5 22.5V6"/><path d="M1.5 11.5C1.5 14 6.5 16 13 16C19.5 16 24.5 14 24.5 11.5"/><path d="M1.5 17C1.5 19.5 6.5 21.5 13 21.5C19.5 21.5 24.5 19.5 24.5 17"/></g></svg>
<!-- WINDOW BORDERS -->
<div class="a" style="left:0;top:0;width:3px;height:1134px;background:#222328"></div>
<div class="a" style="left:1736px;top:0;width:3px;height:1134px;background:#222328"></div>
<div class="a" style="left:0;top:1131px;width:1739px;height:3px;background:#22232B"></div>

</body></html>
